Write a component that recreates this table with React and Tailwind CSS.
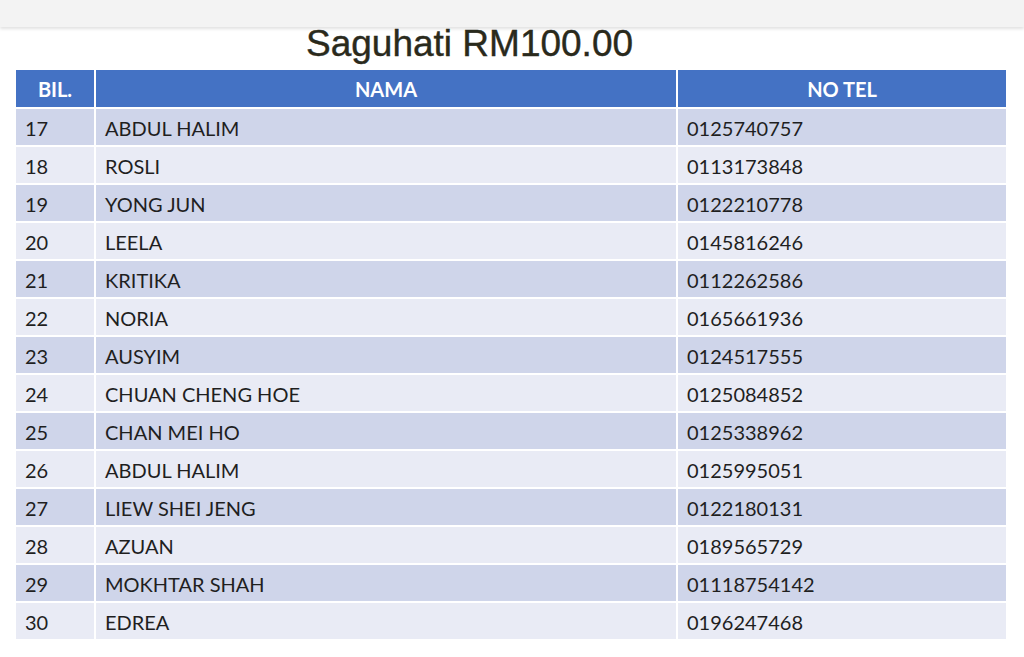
import React from 'react';

const rows = [
    ['17', 'ABDUL HALIM', '0125740757'],
    ['18', 'ROSLI', '0113173848'],
    ['19', 'YONG JUN', '0122210778'],
    ['20', 'LEELA', '0145816246'],
    ['21', 'KRITIKA', '0112262586'],
    ['22', 'NORIA', '0165661936'],
    ['23', 'AUSYIM', '0124517555'],
    ['24', 'CHUAN CHENG HOE', '0125084852'],
    ['25', 'CHAN MEI HO', '0125338962'],
    ['26', 'ABDUL HALIM', '0125995051'],
    ['27', 'LIEW SHEI JENG', '0122180131'],
    ['28', 'AZUAN', '0189565729'],
    ['29', 'MOKHTAR SHAH', '01118754142'],
    ['30', 'EDREA', '0196247468'],
];

const App = () => {
    return (
        <div className="w-[1024px] h-[657px] bg-white overflow-hidden">
            {/* top strip */}
            <div className="h-[27px] bg-[#f3f3f3] shadow-[0_2px_3px_rgba(0,0,0,0.12)]" />

            <h1 className="h-[43px] pl-[306px] text-[37px] leading-[34px] text-[#2a2a1c] [-webkit-text-stroke:0.4px_#2a2a1c] font-['Liberation_Sans',Arial,sans-serif]">
                Saguhati RM100.00
            </h1>

            <div className="px-4 font-['Lato','Open_Sans',sans-serif]">
                <table className="w-[990px] border-collapse text-[20px] text-[#1f1f1f] table-fixed">
                    <colgroup>
                        <col className="w-[79px]" />
                        <col className="w-[582px]" />
                        <col />
                    </colgroup>
                    <thead>
                        <tr className="bg-[#4472c4] text-white h-[38px]">
                            <th className="border-r-2 border-b-2 border-white font-bold text-center">BIL.</th>
                            <th className="border-r-2 border-b-2 border-white font-bold text-center">NAMA</th>
                            <th className="border-b-2 border-white font-bold text-center">NO TEL</th>
                        </tr>
                    </thead>
                    <tbody>
                        {rows.map((r, i) => (
                            <tr key={r[0]} className={`h-[38px] ${i % 2 === 0 ? 'bg-[#cfd5ea]' : 'bg-[#e9ebf5]'}`}>
                                <td className="border-r-2 border-b-2 border-white pl-[9px] pt-[1px]">{r[0]}</td>
                                <td className="border-r-2 border-b-2 border-white pl-[9px] pt-[1px]">{r[1]}</td>
                                <td className="border-b-2 border-white pl-[9px] pt-[1px]">{r[2]}</td>
                            </tr>
                        ))}
                    </tbody>
                </table>
            </div>
        </div>
    );
};

export default App;
